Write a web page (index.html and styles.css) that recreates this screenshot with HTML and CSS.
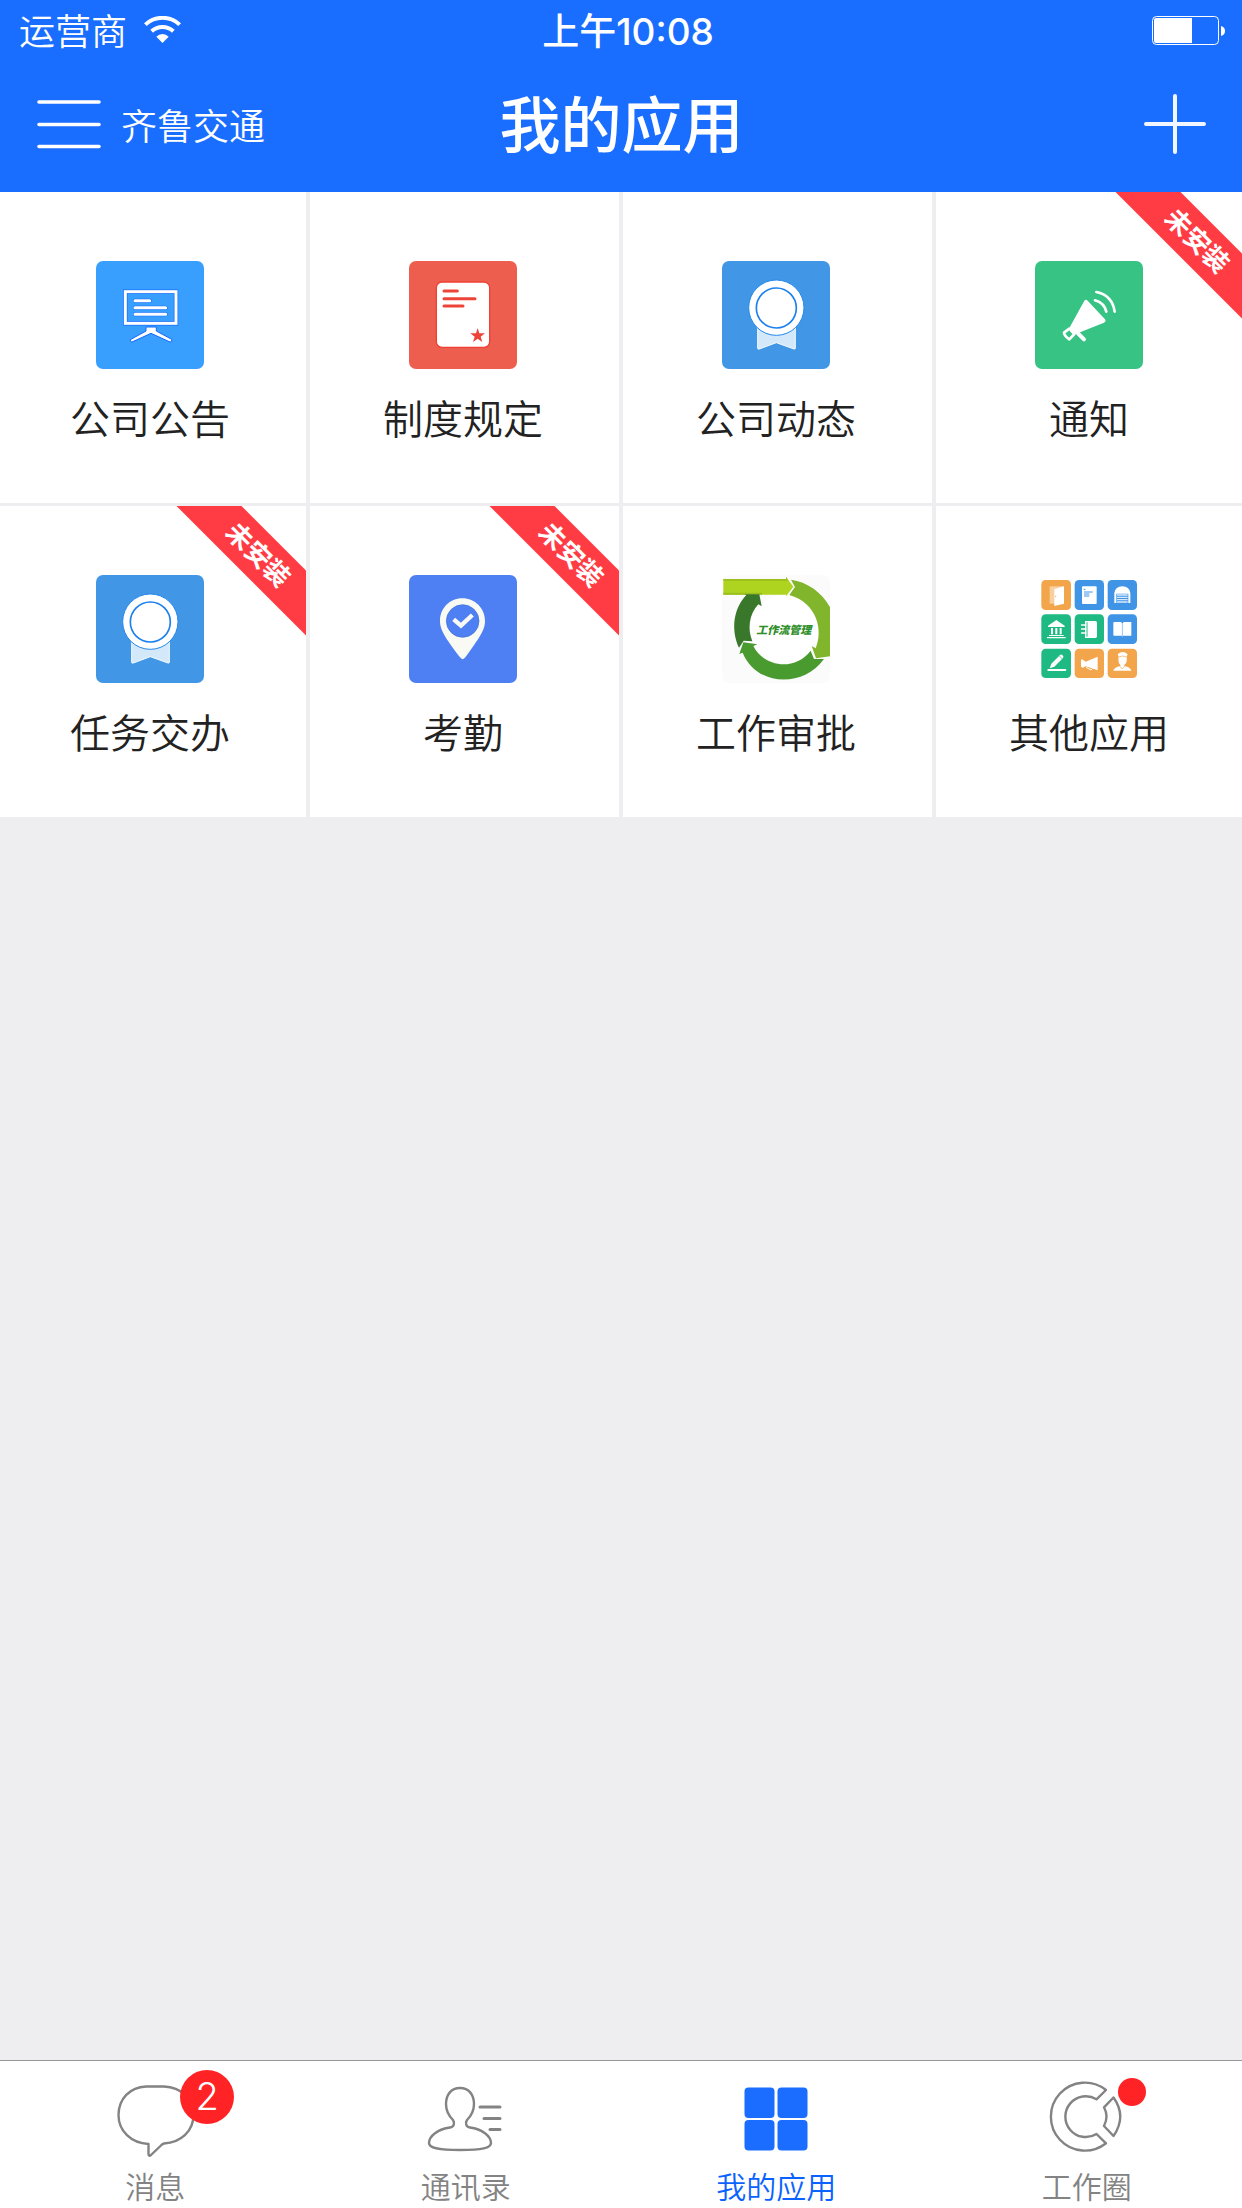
FILE: index.html
```html
<!DOCTYPE html>
<html lang="zh-CN">
<head>
  <meta charset="UTF-8">
  <meta name="viewport" content="width=device-width, initial-scale=1.0">
  <title>我的应用</title>
  <link rel="stylesheet" href="styles.css">
</head>
<body>

<header class="header">
  <div class="status">
    <div class="carrier">
      <span>运营商</span>
      <svg class="wifi" viewBox="0 0 111 81">
        <path d="M4 26A75 75 0 0 1 107 26" fill="none" stroke="#fff" stroke-width="12"/>
        <path d="M23 46A48 48 0 0 1 88 46" fill="none" stroke="#fff" stroke-width="12"/>
        <path d="M37 62A26 26 0 0 1 74 62L55.500 81Z" fill="#fff"/>
      </svg>
    </div>
    <div class="time">上午10:08</div>
    <svg class="battery" viewBox="0 0 73 29">
      <rect x=".5" y=".5" width="66" height="28" rx="4" fill="none" stroke="#fff"/>
      <path d="M4 2H40V27H4A2 2 0 0 1 2 25V4A2 2 0 0 1 4 2Z" fill="#fff"/>
      <path d="M69 10Q73 11 73 15T69 20Z" fill="#fff"/>
    </svg>
  </div>
  <nav class="navbar">
    <button class="menu" type="button">
      <svg class="menu-icon" viewBox="0 0 64 50">
        <path d="M2 3H62M2 25.500H62M2 47.500H62" stroke="#fff" stroke-width="3.600" stroke-linecap="round"/>
      </svg>
      <span>齐鲁交通</span>
    </button>
    <h1 class="title">我的应用</h1>
    <button class="add" type="button" aria-label="添加">
      <svg class="add-icon" viewBox="0 0 62 62">
        <path d="M2 31H60M31 3V59" stroke="#f2f6ff" stroke-width="4" stroke-linecap="round"/>
      </svg>
    </button>
  </nav>
</header>

<main class="content">
  <div class="apps">
    <a class="app" href="#">
      <svg class="app-icon" viewBox="0 0 324 324">
        <rect width="324" height="324" rx="21" fill="#389fff"/>
        <g stroke="#1268ff" fill="none" stroke-linecap="round">
          <rect x="88" y="92" width="152" height="95" stroke-width="13"/>
          <path d="M117 119H161M117 140H209M117 160H209" stroke-width="12"/>
        </g>
        <path d="M150 198H181V210L227 235Q229 243 222 243L165 217L108 243Q101 243 103 236L150 210Z" fill="#fff" stroke="#1268ff" stroke-width="3"/>
        <g stroke="#fff" fill="none" stroke-linecap="round">
          <rect x="88" y="92" width="152" height="95" stroke-width="9"/>
          <path d="M117 119H161M117 140H209M117 160H209" stroke-width="9"/>
        </g>
      </svg>
      <span class="app-name">公司公告</span>
    </a>
    <a class="app" href="#">
      <svg class="app-icon" viewBox="0 0 324 324">
        <rect width="324" height="324" rx="21" fill="#ed5e4e"/>
        <rect x="82" y="63" width="160" height="196" rx="17" fill="#fff" stroke="#f03f34" stroke-width="4"/>
        <path d="M105 90H145M105 113H198M105 135H162" stroke="#ee4438" stroke-width="9" stroke-linecap="round"/>
        <path d="M206 201L211 217H228L215 227L220 243L206 233L192 243L197 227L184 217H201Z" fill="#ee4438"/>
      </svg>
      <span class="app-name">制度规定</span>
    </a>
    <a class="app" href="#">
      <svg class="app-icon" viewBox="0 0 324 324">
        <rect width="324" height="324" rx="21" fill="#4197e6"/>
        <path d="M107 190H220V262Q220 265 216 264L163 245L112 264Q107 266 107 261Z" fill="#d3e9f9" stroke="#f3f9fe" stroke-width="3"/>
        <circle cx="163" cy="140" r="83" fill="#fff" stroke="#2387ee" stroke-width="3"/>
        <circle cx="163" cy="141" r="60" fill="#fff" stroke="#1c80ee" stroke-width="5"/>
      </svg>
      <span class="app-name">公司动态</span>
    </a>
    <a class="app" href="#">
      <svg class="app-icon" viewBox="0 0 324 324">
        <rect width="324" height="324" rx="21" fill="#36c384"/>
        <path d="M148 119Q153 113 158 119L210 175Q215 181 207 185L122 219L103 201Z" fill="#fff"/>
        <path d="M103 203L87 215Q88 225 103 235L118 219Z" fill="none" stroke="#fff" stroke-width="8" stroke-linejoin="round"/>
        <path d="M126 214L147 235" stroke="#fff" stroke-width="12" stroke-linecap="round"/>
        <path d="M180 118Q208 126 214 152M184 93Q232 103 239 152" fill="none" stroke="#fff" stroke-width="8" stroke-linecap="round"/>
      </svg>
      <span class="app-name">通知</span>
      <span class="ribbon">未安装</span>
    </a>
    <a class="app" href="#">
      <svg class="app-icon" viewBox="0 0 324 324">
        <rect width="324" height="324" rx="21" fill="#4197e6"/>
        <path d="M107 190H220V262Q220 265 216 264L163 245L112 264Q107 266 107 261Z" fill="#d3e9f9" stroke="#f3f9fe" stroke-width="3"/>
        <circle cx="163" cy="140" r="83" fill="#fff" stroke="#2387ee" stroke-width="3"/>
        <circle cx="163" cy="141" r="60" fill="#fff" stroke="#1c80ee" stroke-width="5"/>
      </svg>
      <span class="app-name">任务交办</span>
      <span class="ribbon">未安装</span>
    </a>
    <a class="app" href="#">
      <svg class="app-icon" viewBox="0 0 324 324">
        <rect width="324" height="324" rx="21" fill="#4e80f3"/>
        <path d="M160 70C198 70 228 100 228 138C228 166 210 190 169 247Q161 258 153 247C110 190 93 166 93 138C93 100 122 70 160 70Z" fill="#fafaf5"/>
        <circle cx="161" cy="138" r="49" fill="#4e80f3" stroke="#3f6fd0" stroke-width="2"/>
        <path d="M134 133L156 152L190 120" fill="none" stroke="#fafaf5" stroke-width="13"/>
      </svg>
      <span class="app-name">考勤</span>
      <span class="ribbon">未安装</span>
    </a>
    <a class="app" href="#">
      <svg class="app-icon" viewBox="0 0 324 324">
        <rect width="324" height="324" rx="21" fill="#fbfbfb"/>
        <circle cx="188" cy="163" r="103" fill="#fff"/>
        <path d="M4 12H192V6L214 35L192 64V59H4Z" fill="#aed41f"/>
        <path d="M4 12H192V6L200 17H4ZM4 53H120V59H4Z" fill="#9abf1e"/>
        <path d="M207 14C255 21 299 50 324 97V244L282 250L269 213L281 220C304 166 286 84 202 60L219 36Z" fill="#80b52c"/>
        <path d="M52 237L64 202L106 208L94 213C126 277 219 289 266 227L276 252L306 252C244 339 103 335 62 233Z" fill="#4a9b2f"/>
        <path d="M51 218C25 162 36 98 73 60H68L72 58H112L119 94L109 88C81 118 76 162 91 199L65 197Z" fill="#39782a"/>
        <text class="flow-text" x="103" y="178">工作流管理</text>
      </svg>
      <span class="app-name">工作审批</span>
    </a>
    <a class="app" href="#">
      <svg class="app-icon" viewBox="0 0 324 324">
        <g fill="#f2a54a">
          <rect x="19" y="15" width="89" height="90" rx="13"/>
          <rect x="119" y="221" width="88" height="88" rx="13"/>
          <rect x="218" y="221" width="88" height="88" rx="13"/>
        </g>
        <g fill="#3f94e6">
          <rect x="119" y="15" width="88" height="90" rx="13"/>
          <rect x="218" y="15" width="88" height="90" rx="13"/>
          <rect x="218" y="118" width="88" height="89" rx="13"/>
        </g>
        <g fill="#1fb983">
          <rect x="19" y="118" width="89" height="89" rx="13"/>
          <rect x="119" y="118" width="88" height="89" rx="13"/>
          <rect x="19" y="221" width="89" height="88" rx="13"/>
        </g>
        <!-- door -->
        <path d="M44 34H86V86H44Z" fill="#f9cf9d"/>
        <path d="M58 42L87 34V86L58 93Z" fill="#fff"/>
        <circle cx="62" cy="64" r="2" fill="#f2a54a"/>
        <!-- document -->
        <rect x="141" y="34" width="44" height="53" rx="3" fill="#fff"/>
        <path d="M146 43H151M147 51H173M147 57H163M147 63H163" stroke="#3f94e6" stroke-width="3"/>
        <!-- garage -->
        <path d="M238 84V54Q241 34 262 34T286 54V84H280V56H244V84Z" fill="#fff"/>
        <path d="M246 60H278M246 67H278M246 74H278M246 81H278" stroke="#d7eafb" stroke-width="4"/>
        <!-- bank -->
        <path d="M64 135L89 152V156H39V152ZM48 159H54V178H48ZM61 159H67V178H61ZM74 159H80V178H74ZM42 180H86V183H42ZM36 186H92V190H36Z" fill="#fff"/>
        <!-- notebook -->
        <path d="M150 138H181Q186 138 186 143V184Q186 189 181 189H150Z" fill="#fff"/>
        <path d="M156 142V185" stroke="#1fb983" stroke-width="3"/>
        <path d="M140 150H152M140 162H152M140 174H152" stroke="#fff" stroke-width="5" stroke-linecap="round"/>
        <!-- book -->
        <path d="M237 141H256Q260 141 261 145V182H237Q235 182 235 180V143ZM289 141H268Q264 141 264 145V182H289Z" fill="#fff"/>
        <path d="M262 144V185" stroke="#b8d9f7" stroke-width="3"/>
        <!-- pen -->
        <path d="M44 280L49 266L75 240Q79 237 83 241T84 249L58 275Z" fill="#fff"/>
        <path d="M73 243L82 252" stroke="#1fb983" stroke-width="2"/>
        <path d="M40 285H91" stroke="#fff" stroke-width="6" stroke-linecap="round"/>
        <!-- horn -->
        <path d="M188 245V286L152 274L143 278L138 275V254L142 253L152 260Z" fill="#fff"/>
        <path d="M153 277L168 285L172 281" fill="none" stroke="#fff" stroke-width="3"/>
        <!-- officer -->
        <path d="M248 238Q263 224 278 238L275 245Q278 262 268 269V273Q286 277 289 287H235Q238 277 256 273V269Q248 262 251 245Z" fill="#fff"/>
        <path d="M251 246Q263 240 275 246M254 274L262 281L270 274" fill="none" stroke="#f2a54a" stroke-width="2"/>
      </svg>
      <span class="app-name">其他应用</span>
    </a>
  </div>
</main>

<nav class="tabbar">
  <a class="tab" href="#">
    <span class="tab-icon">
      <svg viewBox="0 0 80 80">
        <path class="line" d="M31 8.500H49C66 9 78.500 21 78.500 37C78.500 53 66 64.500 49 65.500Q47 66 46 67.500L36 77Q33.500 79 33.500 76V66C16 65 3.500 53 3.500 37C3.500 21 15 9 31 8.500Z"/>
      </svg>
      <span class="badge">2</span>
    </span>
    <span>消息</span>
  </a>
  <a class="tab" href="#">
    <span class="tab-icon">
      <svg viewBox="0 0 80 80">
        <path class="line" d="M34 10C25 10 20 17 20 26C20 33 23 38 27 42C29 45 28 49 24 49.500C12 51 3 58 3 65C3 70 12 72 34 72S65 70 65 65C65 58 56 51 44 49.500C40 49 39 45 41 42C45 38 48 33 48 26C48 17 43 10 34 10Z"/>
        <path class="line line-bold" d="M54 29H74M58 40.500H74M64 51.500H74"/>
      </svg>
    </span>
    <span>通讯录</span>
  </a>
  <a class="tab active" href="#">
    <span class="tab-icon">
      <svg viewBox="0 0 80 80" fill="#1a6dff">
        <rect x="8.500" y="9.500" width="30" height="30.500" rx="4"/>
        <rect x="41.500" y="9.500" width="30" height="30.500" rx="4"/>
        <rect x="8.500" y="42" width="30" height="30.500" rx="4"/>
        <rect x="41.500" y="42" width="30" height="30.500" rx="4"/>
      </svg>
    </span>
    <span>我的应用</span>
  </a>
  <a class="tab" href="#">
    <span class="tab-icon">
      <svg viewBox="0 0 80 80">
        <path class="line" d="M59 12A34 34 0 1 0 59 65.300L49.500 56A20.400 20.400 0 1 1 49.500 21.300Z"/>
        <path class="line" d="M66.500 19.500L57 29.300Q62 38.500 57 48L66.500 58Q80 38.500 66.500 19.500Z"/>
      </svg>
      <span class="dot"></span>
    </span>
    <span>工作圈</span>
  </a>
</nav>

</body>
</html>
```
FILE: styles.css
```css
* { box-sizing: border-box; }
body { margin: 0; min-height: 100vh; display: flex; flex-direction: column; background-color: #eeeef0; color: #222; font-family: Inter, "Noto Sans CJK SC", sans-serif; font-weight: 350; }
a { color: inherit; text-decoration: none; }
button { padding: 0; border: 0; background: none; color: inherit; font: inherit; cursor: pointer; }
svg { display: block; }

.header { background-color: #196dff; color: #fff; font-size: 36px; }
.status { display: grid; grid-template-columns: 1fr auto 1fr; align-items: center; height: 58px; padding: 0 17px 0 19px; }
.carrier { display: flex; align-items: center; gap: 17px; }
.wifi { width: 37px; height: 27px; }
.time { font-size: 37px; font-weight: 500; padding-left: 12px; }
.battery { width: 73px; height: 29px; margin-top: 2px; justify-self: end; }
.navbar { display: grid; grid-template-columns: 1fr auto 1fr; align-items: center; height: 134px; padding: 0 36px 2px 37px; }
.menu { display: flex; align-items: center; gap: 20px; }
.menu-icon { width: 64px; height: 50px; }
.title { margin: 0; padding-top: 4px; font-size: 61px; font-weight: 500; line-height: 80px; }
.add { justify-self: end; }
.add-icon { width: 62px; height: 62px; }

.content { flex: 1; overflow: hidden; }
.apps { display: grid; grid-template-columns: repeat(4, 1fr); gap: 3px 4px; margin: 0 -3px; }
.app { position: relative; display: flex; flex-direction: column; align-items: center; height: 311px; padding: 69px 3px 0 0; overflow: hidden; background-color: #fff; }
.app-icon { width: 108px; height: 108px; }
.app-name { margin-top: 21px; font-size: 40px; line-height: 60px; }
.flow-text { font-size: 33px; font-weight: 900; font-style: italic; fill: #2f8f2a; }
.ribbon { position: absolute; top: 26px; right: -52px; width: 200px; height: 46px; background-color: #ff3b44; color: #fff; font-size: 26px; font-weight: 700; line-height: 46px; text-align: center; transform: rotate(45deg); }

.tabbar { display: flex; height: 148px; border-top: 1px solid #98989b; background-color: #fff; color: #838383; font-size: 30px; line-height: 40px; }
.tab { flex: 1; display: flex; flex-direction: column; align-items: center; gap: 9px; padding-top: 17px; }
.tab.active { color: #0a62ff; }
.tab-icon { position: relative; width: 80px; height: 80px; }
.line { fill: none; stroke: #838383; stroke-width: 2.4; stroke-linejoin: round; }
.line-bold { stroke-width: 3; stroke-linecap: round; }
.badge { position: absolute; top: -8px; left: 65px; width: 54px; height: 54px; border-radius: 50%; background-color: #ff2326; color: #fff; font-size: 38px; line-height: 52px; text-align: center; }
.dot { position: absolute; top: 0; left: 71px; width: 28px; height: 28px; border-radius: 50%; background-color: #ff2326; }
```
